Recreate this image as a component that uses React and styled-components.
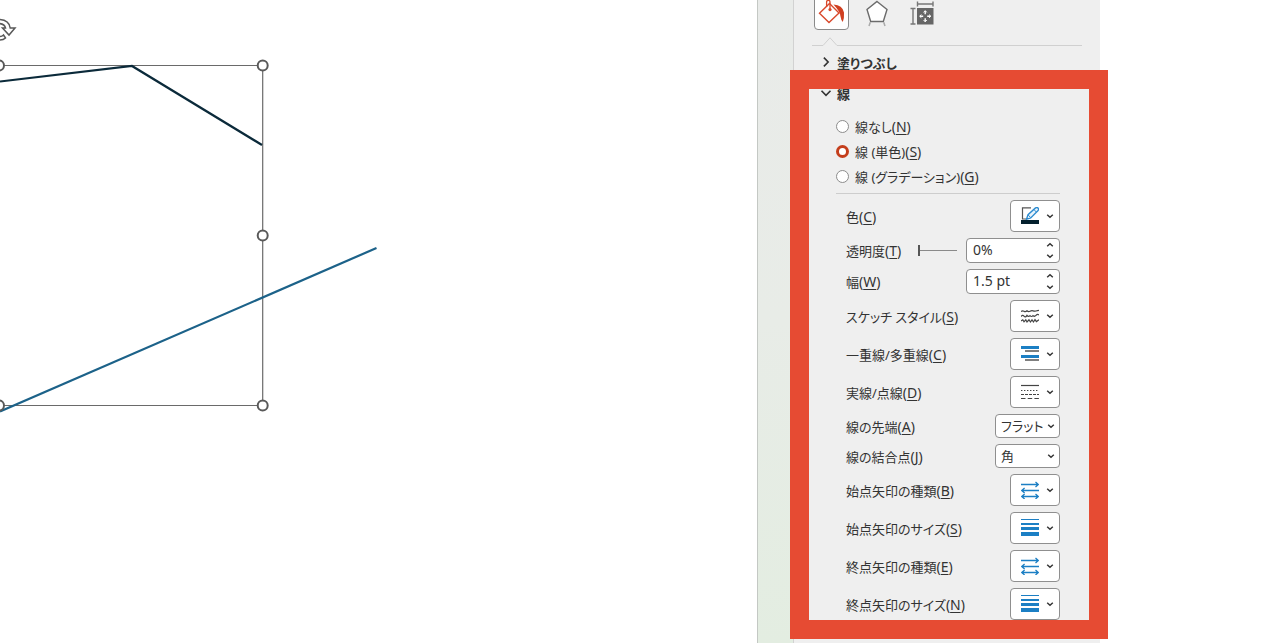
import React from 'react';
import styled, { createGlobalStyle } from 'styled-components';

const GlobalStyle = createGlobalStyle`
	*, *::before, *::after {
		box-sizing: border-box;
	}
	body {
		margin: 0;
		background: #fff;
		overflow: hidden;
	}
	body, button, input, select {
		font-family: 'Noto Sans', 'Noto Sans CJK JP', sans-serif;
		font-size: 13px;
		font-feature-settings: 'palt';
		color: #333;
	}
`;

const blue = '#1c7fc4';

const Chevron = ({ size = 8, dir = 'down', width = 1.5 }) => {
	const paths = {
		down: 'M1 2.5 L4 5.5 L7 2.5',
		up: 'M1 5.5 L4 2.5 L7 5.5',
		small: 'M1.2 2.8 L4 5.2 L6.8 2.8',
		smallUp: 'M1.2 5.2 L4 2.8 L6.8 5.2',
		right: 'M2.3 0.5 L5.7 4 L2.3 7.5',
	};
	return (
		<svg width={size} height={size} viewBox="0 0 8 8" fill="none" stroke="#333" strokeWidth={width} aria-hidden="true">
			<path d={paths[dir]} />
		</svg>
	);
};

const Icon = ({ children }) => (
	<svg width="18" height="18" viewBox="0 0 18 18" fill="none" aria-hidden="true">
		{children}
	</svg>
);

const ColorIcon = () => (
	<Icon>
		<path d="M10 .8H1.5V12H5" stroke="#555" strokeWidth="1.2" />
		<path d="M5.5 12.2L7 7.7L14.5 .9Q16.2 -.1 17.3 1.3Q18 2.6 16.9 3.7L9.7 11Z" fill="#e8f3fb" stroke="#2b8bd0" strokeWidth="1.3" />
		<path d="M7.2 8L9.6 10.6M13 2.6L15.3 5" stroke="#2b8bd0" />
		<rect y="13" width="18" height="4" fill="#04202e" />
	</Icon>
);

const SketchIcon = () => (
	<Icon>
		<g stroke="#444" strokeWidth="1.2">
			<path d="M0 4.5Q1.5 3.2 3 4.2T6 3.8Q7.5 5 9 4.2T12 3.8T15 4T18 3.4" />
			<path d="M0 9.6Q1.5 7.4 3 9.2T6 8.4Q7.5 10.4 9 8.6Q10.5 10.4 12 8.6Q13.5 10 15 8.4T18 8" />
			<path d="M0 14L1.8 12.8L3 14.8L4.8 12.8L6 15L8 12.8L9.4 15L11 12.8L12.4 15L14 12.6L15.4 14.6L18 12.8" />
		</g>
	</Icon>
);

const CompoundIcon = () => (
	<Icon>
		<path d="M0 2.5H18M0 11.5H18" stroke={blue} strokeWidth="3" />
		<path d="M4 6H18M4 15H18" stroke="#555" strokeWidth="1.4" />
	</Icon>
);

const DashIcon = () => (
	<Icon>
		<g stroke="#444" strokeWidth="1.2">
			<path d="M0 2.5H18" />
			<path d="M0 7.5H18" strokeDasharray="1.4 1.6" />
			<path d="M0 11.5H18" strokeDasharray="3 1" />
			<path d="M0 15.5H18" strokeDasharray="4.5 2.2" />
		</g>
	</Icon>
);

const ArrowTypeIcon = () => (
	<Icon>
		<g stroke={blue} strokeWidth="1.3">
			<path d="M0 3.5H17.3M14.5 1L17.3 3.5L14.5 6" />
			<path d="M18 9.5H.8M3.6 7L.8 9.5L3.6 12" />
			<path d="M.8 15.5H17.3M3.6 13L.8 15.5L3.6 18M14.5 13L17.3 15.5L14.5 18" />
		</g>
	</Icon>
);

const ArrowSizeIcon = () => (
	<Icon>
		<g fill={blue}>
			<rect width="18" height="1" />
			<rect y="4" width="18" height="2" />
			<rect y="8" width="18" height="3" />
			<rect y="13" width="18" height="4" />
		</g>
	</Icon>
);

const FillTabIcon = () => (
	<svg width="27" height="26" viewBox="0 0 27 26" fill="none" aria-hidden="true">
		<path d="M11.5 3.5L21 13L11 22.5L1.5 13.3Z" stroke="#d9482b" strokeWidth="1.4" />
		<path d="M8.6 7V2Q8.6 .3 10.3 .3T12 2V9" stroke="#d9482b" strokeWidth="1.3" />
		<circle cx="12" cy="9.6" r="1.6" fill="#d9482b" />
		<path d="M15.5 4.5Q24.5 5 26 12.5Q26.4 18 24.8 22Q23 20 22.4 16Q22 11.5 15.5 4.5Z" fill="#d03f20" />
	</svg>
);

const EffectsTabIcon = () => (
	<svg width="24" height="28" viewBox="0 0 24 28" fill="none" aria-hidden="true">
		<path d="M12 2.5L22 10.5L18.3 22.5H5.7L2 10.5Z" fill="#fff" stroke="#6b6b6b" strokeWidth="1.4" />
		<path d="M5.3 23.2L4 27M18.7 23.2L20 27" stroke="#aaa" strokeWidth="1.5" />
	</svg>
);

const SizeTabIcon = () => (
	<svg width="24" height="26" viewBox="0 0 24 26" fill="none" aria-hidden="true">
		<path d="M7.5 4H23M7.5 1.5V6.5M23 1.5V6.5M3 8.5V24M.5 8.5H5.5M.5 24H5.5" stroke="#777" strokeWidth="1.4" />
		<rect x="7" y="8" width="16.5" height="16.5" fill="#666" />
		<path d="M15.2 11V14.2M15.2 18.2V21.4M10 16.2H13.2M17.2 16.2H20.4" stroke="#fff" strokeWidth="1.4" />
		<path d="M13.6 12.4L15.2 10.6L16.8 12.4M13.6 20L15.2 21.8L16.8 20M11.4 14.6L9.6 16.2L11.4 17.8M19 14.6L20.8 16.2L19 17.8" stroke="#fff" />
	</svg>
);

// slide area with the selected freeform and its handles
const Drawing = () => (
	<svg width="757" height="643" viewBox="0 0 757 643" fill="none" aria-hidden="true">
		<path d="M0 65.5H262.7V405.5H0" stroke="#6a6a6a" strokeWidth="1.2" />
		<path d="M0 81.5L132 66L262 145" stroke="#0b2a3a" strokeWidth="2.2" />
		<path d="M0 411.5L376.5 248" stroke="#1c6289" strokeWidth="2.2" />
		<g fill="#fff" stroke="#595959" strokeWidth="2">
			<circle cx="-1" cy="65.5" r="5" />
			<circle cx="262.7" cy="65.5" r="5" />
			<circle cx="262.7" cy="235.5" r="5" />
			<circle cx="262.7" cy="405.5" r="5" />
			<circle cx="-1" cy="405.5" r="5" />
		</g>
		<g stroke="#595959" strokeWidth="1.5">
			<path d="M-2 19.5Q9 19.5 10.2 28H15L9 35L2.5 28H5.5Q4.5 23.5 -2 23.5" fill="#fff" />
			<path d="M-2 36.5Q1.5 37 3.5 35L5.5 38Q3 40.5 -2 40" fill="#fff" />
		</g>
	</svg>
);

const fields = [
	{ id: 'color', label: '色', mnemonic: 'C', type: 'menu', icon: <ColorIcon /> },
	{ id: 'transparency', label: '透明度', mnemonic: 'T', type: 'spin', value: '0%', slider: true },
	{ id: 'width', label: '幅', mnemonic: 'W', type: 'spin', value: '1.5 pt' },
	{ id: 'sketch', label: 'スケッチ スタイル', mnemonic: 'S', type: 'menu', icon: <SketchIcon /> },
	{ id: 'compound', label: '一重線/多重線', mnemonic: 'C', type: 'menu', icon: <CompoundIcon /> },
	{ id: 'dash', label: '実線/点線', mnemonic: 'D', type: 'menu', icon: <DashIcon /> },
	{ id: 'cap', label: '線の先端', mnemonic: 'A', type: 'select', value: 'フラット' },
	{ id: 'join', label: '線の結合点', mnemonic: 'J', type: 'select', value: '角' },
	{ id: 'begin-type', label: '始点矢印の種類', mnemonic: 'B', type: 'menu', icon: <ArrowTypeIcon /> },
	{ id: 'begin-size', label: '始点矢印のサイズ', mnemonic: 'S', type: 'menu', icon: <ArrowSizeIcon /> },
	{ id: 'end-type', label: '終点矢印の種類', mnemonic: 'E', type: 'menu', icon: <ArrowTypeIcon /> },
	{ id: 'end-size', label: '終点矢印のサイズ', mnemonic: 'N', type: 'menu', icon: <ArrowSizeIcon /> },
];

const lineTypes = [
	{ id: 'none', label: '線なし', mnemonic: 'N' },
	{ id: 'solid', label: '線 (単色)', mnemonic: 'S' },
	{ id: 'gradient', label: '線 (グラデーション)', mnemonic: 'G' },
];

const Control = ({ field }) => {
	const { id, type, icon, value } = field;
	if (type === 'menu') {
		return (
			<MenuButton id={id} type="button" aria-haspopup="menu">
				{icon}
				<Chevron dir="small" />
			</MenuButton>
		);
	}
	if (type === 'select') {
		return (
			<SelectBox>
				<select id={id} defaultValue={value}>
					<option>{value}</option>
				</select>
				<Chevron dir="small" />
			</SelectBox>
		);
	}
	return (
		<SpinBox>
			<input id={id} type="text" defaultValue={value} />
			<div>
				<button type="button" aria-label="up">
					<Chevron dir="smallUp" />
				</button>
				<button type="button" aria-label="down">
					<Chevron dir="small" />
				</button>
			</div>
		</SpinBox>
	);
};

const App = () => {
	return (
		<Wrapper>
			<GlobalStyle />
			<Canvas>
				<Drawing />
			</Canvas>
			<Gutter />
			<Panel>
				<Tabs>
					<Tab type="button" $active aria-label="塗りつぶしと線">
						<FillTabIcon />
					</Tab>
					<Tab type="button" aria-label="効果">
						<EffectsTabIcon />
					</Tab>
					<Tab type="button" aria-label="サイズとプロパティ">
						<SizeTabIcon />
					</Tab>
				</Tabs>
				<TabRule>
					<svg width="26" height="9" viewBox="0 0 26 9" fill="none" stroke="#d0d0d0" aria-hidden="true">
						<path d="M0 8.5H11L18 .8L25 8.5H26" />
					</svg>
				</TabRule>
				<FillSection>
					<SectionTitle type="button" aria-expanded="false">
						<Chevron size={10} dir="right" width={1.3} />
						塗りつぶし
					</SectionTitle>
				</FillSection>
				<LineSection>
					<SectionTitle type="button" aria-expanded="true">
						<Chevron size={12} width={1.1} />線
					</SectionTitle>
					<RadioGroup>
						{lineTypes.map(({ id, label, mnemonic }) => (
							<label key={id}>
								<input type="radio" name="line" defaultChecked={id === 'solid'} />
								<span>
									{label}
									<Mnemonic>
										(<u>{mnemonic}</u>)
									</Mnemonic>
								</span>
							</label>
						))}
					</RadioGroup>
					<Fields>
						{fields.map((field) => (
							<Row key={field.id}>
								<label htmlFor={field.id}>
									{field.label}
									<Mnemonic>
										(<u>{field.mnemonic}</u>)
									</Mnemonic>
								</label>
								{field.slider && <Slider type="range" min="0" max="100" defaultValue="0" aria-label={field.label} />}
								<Control field={field} />
							</Row>
						))}
					</Fields>
				</LineSection>
			</Panel>
		</Wrapper>
	);
};

const Wrapper = styled.main`
	display: flex;
	min-height: 100vh;
	padding-right: 180px;
	overflow: hidden;
	svg {
		display: block;
		flex-shrink: 0;
	}
`;

const Mnemonic = styled.span`
	font-size: 14px;
	u {
		text-underline-offset: 2px;
	}
`;

const Canvas = styled.section`
	flex: 1;
	min-width: 0;
	overflow: hidden;
`;

const Gutter = styled.div`
	width: 36px;
	border-left: 1px solid #c4c8c4;
	background: linear-gradient(#e9ebe9, #e8ece7 50%, #e3ede1);
`;

const Panel = styled.aside`
	width: 307px;
	border-left: 1px solid #d2d2d2;
	background: #efefef;
`;

const Tabs = styled.div`
	display: flex;
	gap: 10px;
	margin-top: -5px;
	padding-left: 20px;
`;

const Tab = styled.button`
	display: flex;
	align-items: center;
	justify-content: center;
	width: 35px;
	height: 35px;
	padding: 0;
	border: 1px solid ${({ $active }) => ($active ? '#8a8a8a' : 'transparent')};
	border-radius: 4px;
	background: ${({ $active }) => ($active ? '#fff' : 'transparent')};
`;

const TabRule = styled.div`
	display: flex;
	align-items: flex-end;
	margin: 7px 18px 2px;
	&::after {
		content: '';
		flex: 1;
		border-bottom: 1px solid #d0d0d0;
	}
`;

const FillSection = styled.section`
	margin: 0 11px 0 15px;
`;

/* the red marker frame lies over the panel edges */
const LineSection = styled.section`
	position: relative;
	margin: 0 11px 0 15px;
	&::after {
		content: '';
		position: absolute;
		inset: -9px -19px -19px;
		border: 19px solid #e64b33;
		pointer-events: none;
	}
`;

const SectionTitle = styled.button`
	display: grid;
	grid-template-columns: 12px auto;
	justify-items: center;
	align-items: center;
	column-gap: 5px;
	height: 31px;
	padding: 0 0 3px 11px;
	border: 0;
	background: none;
	font-weight: 700;
`;

const RadioGroup = styled.div`
	margin: 0 29px 0 27px;
	padding: 4px 0;
	border-bottom: 1px solid #cdcdcd;
	label {
		display: flex;
		align-items: center;
		gap: 6px;
		height: 25px;
	}
	input {
		appearance: none;
		width: 13px;
		height: 13px;
		margin: 0;
		border: 1px solid #8c8c8c;
		border-radius: 50%;
		background: #fff;
	}
	input:checked {
		border: 3px solid #c43e1c;
	}
`;

const Fields = styled.div`
	display: grid;
	gap: 6px;
	margin: 6px 29px 0 37px;
`;

const Row = styled.div`
	display: flex;
	align-items: center;
	label {
		margin-right: auto;
		white-space: nowrap;
	}
`;

const MenuButton = styled.button`
	display: flex;
	align-items: center;
	gap: 7px;
	width: 50px;
	height: 32px;
	padding: 0 0 0 10px;
	border: 1px solid #8f8f8f;
	border-radius: 4px;
	background: #fff;
`;

const SelectBox = styled.div`
	position: relative;
	select {
		appearance: none;
		display: block;
		width: 65px;
		height: 24px;
		padding: 0 16px 0 5px;
		border: 1px solid #8f8f8f;
		border-radius: 4px;
		background: #fff;
	}
	svg {
		position: absolute;
		top: 8px;
		right: 5px;
		pointer-events: none;
	}
`;

const SpinBox = styled.div`
	display: flex;
	width: 94px;
	height: 25px;
	border: 1px solid #8f8f8f;
	border-radius: 4px;
	background: #fff;
	input {
		flex: 1;
		min-width: 0;
		padding: 0 0 2px 6px;
		border: 0;
		background: none;
		font-size: 14px;
	}
	div {
		display: grid;
		align-content: center;
		gap: 3px;
		padding-right: 5px;
	}
	button {
		padding: 0;
		border: 0;
		background: none;
	}
`;

const Slider = styled.input`
	appearance: none;
	width: 39px;
	height: 12px;
	margin: 0 9px 0 0;
	background: linear-gradient(#8a8a8a, #8a8a8a) center / 100% 1px no-repeat;
	&::-webkit-slider-thumb {
		appearance: none;
		width: 2px;
		height: 11px;
		background: #555;
	}
`;

export default App;
